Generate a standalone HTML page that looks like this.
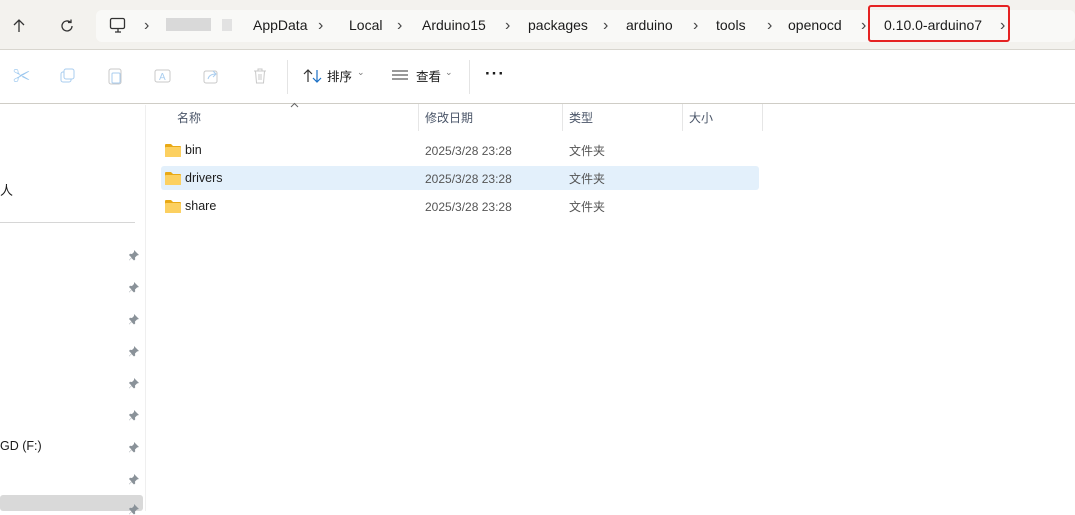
<!DOCTYPE html>
<html><head><meta charset="utf-8"><style>
*{margin:0;padding:0;box-sizing:border-box}
body{width:1075px;height:511px;overflow:hidden;background:#fff;font-family:"Liberation Sans","Noto Sans CJK SC",sans-serif;position:relative;font-size:13px;color:#1a1a1a}
.abs{position:absolute}
.top{left:0;top:0;width:1075px;height:50px;background:#f3f2ee;border-bottom:1px solid #d8d6cf}
.addr{left:96px;top:10px;width:979px;height:32px;background:#f9f9f7;border-radius:6px}
.t{position:absolute;top:17px;font-size:14px;color:#1b1b1b;white-space:nowrap}
.ch{position:absolute;top:17px;font-size:16px;color:#444}
.hl{left:868px;top:5px;width:142px;height:37px;border:2px solid #e52222;border-radius:3px}
.tb{left:0;top:51px;width:1075px;height:53px;background:#fff;border-bottom:1px solid #cfcdc6}
.hdr{font-size:12px;color:#4a5568;top:109px}
.col{top:104px;width:1px;height:27px;background:#e6e6e6}
.row{font-size:12.5px;color:#1b1b1b}
.d{font-size:12px;color:#555}
.c{font-size:12px;color:#555}
.pin{position:absolute;left:128px;width:12px;height:12px}
</style></head><body>
<div class="abs top"></div>
<div class="abs addr"></div>
<svg class="abs" style="left:11px;top:18px" width="16" height="16" viewBox="0 0 16 16"><path d="M8 14V2M3 7l5-5 5 5" stroke="#333" stroke-width="1.3" fill="none"/></svg>
<svg class="abs" style="left:59px;top:18px" width="16" height="16" viewBox="0 0 16 16"><path d="M13 8a5 5 0 1 1-1.5-3.6M12 1.5v3h-3" stroke="#333" stroke-width="1.3" fill="none"/></svg>
<svg class="abs" style="left:109px;top:17px" width="18" height="17" viewBox="0 0 18 17"><rect x="1.5" y="1.5" width="14" height="10" rx="1.5" stroke="#333" stroke-width="1.3" fill="none"/><path d="M6 15h6M9 12v3" stroke="#333" stroke-width="1.3"/></svg>
<span class="ch" style="left:144px">›</span>
<div class="abs" style="left:166px;top:18px;width:45px;height:13px;background:#ccc;opacity:.7"></div>
<div class="abs" style="left:222px;top:19px;width:10px;height:12px;background:#e2e2e2"></div>
<span class="t" style="left:253px">AppData</span><span class="ch" style="left:318px">›</span>
<span class="t" style="left:349px">Local</span><span class="ch" style="left:397px">›</span>
<span class="t" style="left:422px">Arduino15</span><span class="ch" style="left:505px">›</span>
<span class="t" style="left:528px">packages</span><span class="ch" style="left:603px">›</span>
<span class="t" style="left:626px">arduino</span><span class="ch" style="left:693px">›</span>
<span class="t" style="left:716px">tools</span><span class="ch" style="left:767px">›</span>
<span class="t" style="left:788px">openocd</span><span class="ch" style="left:861px">›</span>
<span class="t" style="left:884px">0.10.0-arduino7</span><span class="ch" style="left:1000px">›</span>
<div class="abs hl"></div>
<div class="abs tb"></div>
<div class="abs" style="top:62px;left:13px;color:#9cc8ef;font-size:17px">✂</div>
<svg class="abs" style="left:60px;top:68px" width="16" height="16"><rect x="1" y="4" width="10" height="10" rx="2" stroke="#a9cdef" fill="none"/><rect x="4" y="1" width="10" height="10" rx="2" stroke="#a9cdef" fill="#fff"/></svg>
<svg class="abs" style="left:107px;top:67px" width="16" height="18"><rect x="2" y="2" width="12" height="15" rx="2" stroke="#c8c8c8" fill="none"/><rect x="5" y="6" width="8" height="10" rx="1" stroke="#a9cdef" fill="none"/></svg>
<svg class="abs" style="left:154px;top:68px" width="18" height="16"><rect x="1" y="2" width="15" height="12" rx="2" stroke="#c8c8c8" fill="none"/><text x="5" y="12" font-size="10" fill="#a9cdef" font-family="Liberation Sans">A</text></svg>
<svg class="abs" style="left:203px;top:68px" width="17" height="16"><rect x="1" y="3" width="13" height="12" rx="2" stroke="#c8c8c8" fill="none"/><path d="M5 11c1-4 4-5 8-5M10 3l3 3-3 3" stroke="#a9cdef" fill="none"/></svg>
<svg class="abs" style="left:252px;top:67px" width="16" height="18"><path d="M2 4h12M6 4V2h4v2M3.5 4l1 12h7l1-12M7 7v6M9 7v6" stroke="#c8c8c8" fill="none"/></svg>
<div class="abs" style="left:287px;top:60px;width:1px;height:34px;background:#e4e4e4"></div>
<svg class="abs" style="left:303px;top:68px" width="20" height="16"><path d="M5 14V2M1 6l4-4 4 4" stroke="#333" stroke-width="1.2" fill="none"/><path d="M14 2v12M10 10l4 4 4-4" stroke="#1a6fc4" stroke-width="1.2" fill="none"/></svg>
<span class="abs" style="left:327px;top:66px;font-size:12.5px">排序</span><span class="abs" style="left:357px;top:67px;font-size:9px;color:#777">⌄</span>
<svg class="abs" style="left:392px;top:70px" width="16" height="12"><path d="M0 1h16M0 5h16M0 9h16" stroke="#333" stroke-width="1.1"/></svg>
<span class="abs" style="left:416px;top:66px;font-size:12.5px">查看</span><span class="abs" style="left:445px;top:67px;font-size:9px;color:#777">⌄</span>
<div class="abs" style="left:469px;top:60px;width:1px;height:34px;background:#e4e4e4"></div>
<span class="abs" style="left:485px;top:64px;font-size:17px;font-weight:bold;letter-spacing:1px">···</span>
<div class="abs" style="left:145px;top:105px;width:1px;height:406px;background:#efefef"></div>
<div class="abs" style="left:0;top:222px;width:135px;height:1px;background:#d6d6d6"></div>
<span class="abs" style="left:0;top:180px;font-size:13px">人</span>
<span class="abs" style="left:0;top:439px;font-size:12.5px">GD (F:)</span>
<div class="abs" style="left:0;top:495px;width:143px;height:16px;background:#d9d9d9;border-radius:3px"></div>
<svg width="0" height="0" style="position:absolute"><defs><g id="p"><path d="M6 1l5 5-2 .5-2 2 .2 2L6 11.5 3.5 9 1 11.5 1 11l2.5-2.5L1 6l1-1.2 2 .2 2-2z" fill="#8a9299"/></g></defs></svg>
<svg class="pin" style="top:249px"><use href="#p"/></svg>
<svg class="pin" style="top:281px"><use href="#p"/></svg>
<svg class="pin" style="top:313px"><use href="#p"/></svg>
<svg class="pin" style="top:345px"><use href="#p"/></svg>
<svg class="pin" style="top:377px"><use href="#p"/></svg>
<svg class="pin" style="top:409px"><use href="#p"/></svg>
<svg class="pin" style="top:441px"><use href="#p"/></svg>
<svg class="pin" style="top:473px"><use href="#p"/></svg>
<svg class="pin" style="top:503px"><use href="#p"/></svg>
<svg class="abs" style="left:290px;top:102px" width="9" height="6"><path d="M1 5l3.5-3.5L8 5" stroke="#666" fill="none"/></svg>
<span class="abs hdr" style="left:177px">名称</span>
<div class="abs col" style="left:418px"></div>
<span class="abs hdr" style="left:425px">修改日期</span>
<div class="abs col" style="left:562px"></div>
<span class="abs hdr" style="left:569px">类型</span>
<div class="abs col" style="left:682px"></div>
<span class="abs hdr" style="left:689px">大小</span>
<div class="abs col" style="left:762px"></div>
<div class="abs" style="left:161px;top:166px;width:598px;height:24px;background:#e3f0fb;border-radius:3px"></div>
<svg class="abs" style="left:165px;top:143px" width="16" height="14"><path d="M0 2a1 1 0 0 1 1-1h5l2 2h7a1 1 0 0 1 1 1v9a1 1 0 0 1-1 1H1a1 1 0 0 1-1-1z" fill="#e9a915"/><rect x="0" y="4" width="16" height="10" rx="1" fill="#fcd060"/></svg>
<svg class="abs" style="left:165px;top:171px" width="16" height="14"><path d="M0 2a1 1 0 0 1 1-1h5l2 2h7a1 1 0 0 1 1 1v9a1 1 0 0 1-1 1H1a1 1 0 0 1-1-1z" fill="#e9a915"/><rect x="0" y="4" width="16" height="10" rx="1" fill="#fcd060"/></svg>
<svg class="abs" style="left:165px;top:199px" width="16" height="14"><path d="M0 2a1 1 0 0 1 1-1h5l2 2h7a1 1 0 0 1 1 1v9a1 1 0 0 1-1 1H1a1 1 0 0 1-1-1z" fill="#e9a915"/><rect x="0" y="4" width="16" height="10" rx="1" fill="#fcd060"/></svg>
<span class="abs row" style="left:185px;top:143px">bin</span>
<span class="abs row" style="left:185px;top:171px">drivers</span>
<span class="abs row" style="left:185px;top:199px">share</span>
<span class="abs d" style="left:425px;top:144px">2025/3/28 23:28</span>
<span class="abs d" style="left:425px;top:172px">2025/3/28 23:28</span>
<span class="abs d" style="left:425px;top:200px">2025/3/28 23:28</span>
<span class="abs c" style="left:569px;top:142px">文件夹</span>
<span class="abs c" style="left:569px;top:170px">文件夹</span>
<span class="abs c" style="left:569px;top:198px">文件夹</span>
</body></html>
